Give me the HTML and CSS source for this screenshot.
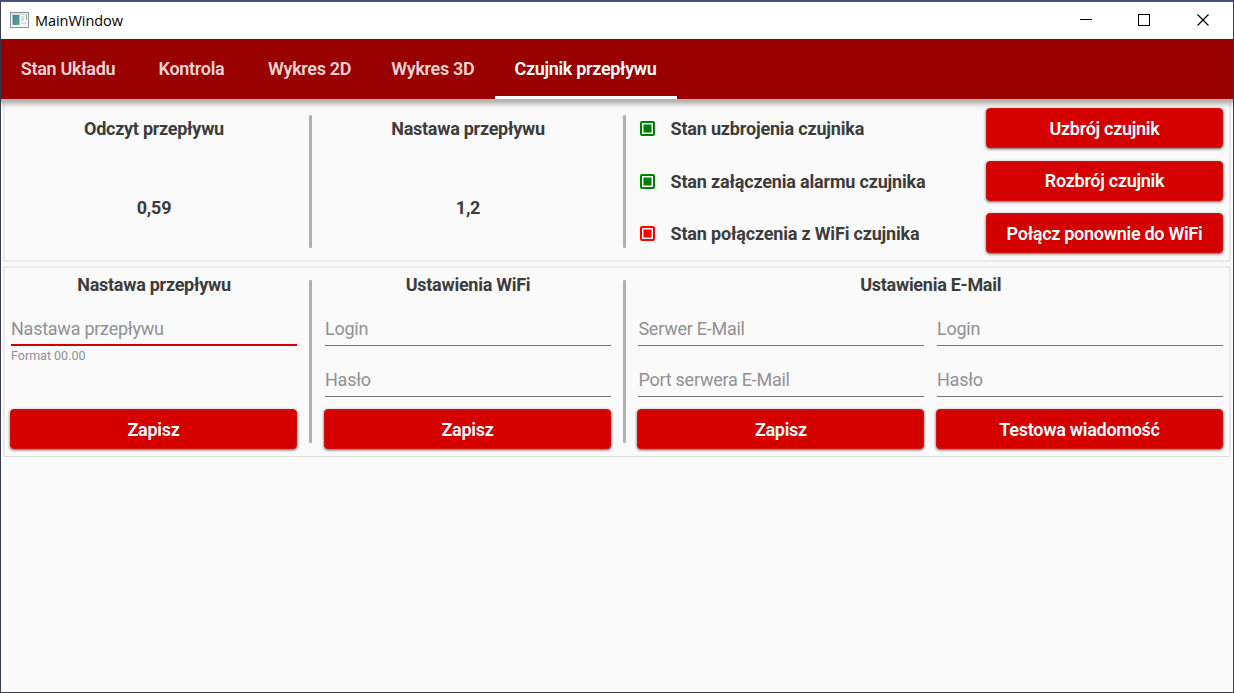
FILE: index.html
```html
<!DOCTYPE html>
<html lang="pl">
<head>
<meta charset="utf-8">
<title>MainWindow</title>
<link rel="stylesheet" href="styles.css">
</head>
<body>
<div class="window">
  <header class="titlebar">
    <svg class="app-icon" width="20" height="17" viewBox="0 0 20 17">
      <defs><linearGradient id="scr" x1="0" y1="0" x2="1" y2="1"><stop offset="0" stop-color="#3f7fa6"/><stop offset="1" stop-color="#5fae7b"/></linearGradient></defs>
      <rect x=".5" y=".5" width="18" height="15" fill="#f8f8f8" stroke="#8d949b"/>
      <rect x="1" y="1" width="17" height="2" fill="#dfe3e8"/>
      <rect x="2.500" y="3" width="7" height="10" fill="url(#scr)"/>
      <path d="M11 4h3v5h-3zM11 10h6v2h-6z" fill="#dcdfe2"/>
      <rect x="16" y="3" width="1" height="5" fill="#73b28b"/>
    </svg>
    <span class="title">MainWindow</span>
    <svg class="controls" width="131" height="12" viewBox="0 0 131 12" fill="none" stroke="#000" shape-rendering="crispEdges">
      <path d="M0 5.5h12"/>
      <rect x="58.500" y=".5" width="11" height="11"/>
      <path d="M117.500 .5l11 11M128.500 .5l-11 11" shape-rendering="auto" stroke-width="1.150"/>
    </svg>
  </header>
  <nav class="tabs">
    <a class="tab tab-state">Stan Układu</a>
    <a class="tab tab-control">Kontrola</a>
    <a class="tab tab-plot">Wykres 2D</a>
    <a class="tab tab-plot">Wykres 3D</a>
    <a class="tab tab-flow active">Czujnik przepływu</a>
  </nav>
  <main class="content">
    <section class="panel status">
      <div class="reading"><h2>Odczyt przepływu</h2><div class="value">0,59</div></div>
      <div class="divider"></div>
      <div class="reading"><h2>Nastawa przepływu</h2><div class="value">1,2</div></div>
      <div class="divider"></div>
      <div class="sensor">
        <div class="row"><i class="led"></i><span class="state">Stan uzbrojenia czujnika</span><button class="btn">Uzbrój czujnik</button></div>
        <div class="row"><i class="led"></i><span class="state">Stan załączenia alarmu czujnika</span><button class="btn">Rozbrój czujnik</button></div>
        <div class="row"><i class="led off"></i><span class="state">Stan połączenia z WiFi czujnika</span><button class="btn">Połącz ponownie do WiFi</button></div>
      </div>
    </section>
    <section class="panel settings">
      <div class="group">
        <h2>Nastawa przepływu</h2>
        <div class="column">
          <div class="field focused">Nastawa przepływu</div>
          <div class="hint">Format 00.00</div>
          <button class="btn">Zapisz</button>
        </div>
      </div>
      <div class="divider"></div>
      <div class="group">
        <h2>Ustawienia WiFi</h2>
        <div class="column">
          <div class="field">Login</div>
          <div class="field">Hasło</div>
          <button class="btn">Zapisz</button>
        </div>
      </div>
      <div class="divider"></div>
      <div class="group wide">
        <h2>Ustawienia E-Mail</h2>
        <div class="pair">
          <div class="column">
            <div class="field">Serwer E-Mail</div>
            <div class="field">Port serwera E-Mail</div>
            <button class="btn">Zapisz</button>
          </div>
          <div class="column">
            <div class="field">Login</div>
            <div class="field">Hasło</div>
            <button class="btn">Testowa wiadomość</button>
          </div>
        </div>
      </div>
    </section>
  </main>
</div>
</body>
</html>
```
FILE: styles.css
```css
* { box-sizing: border-box; }
body { margin: 0; font-family: Roboto, sans-serif; font-size: 18px; color: #3c3c3c; overflow: hidden; }
h2 { margin: 0; font-size: 18px; font-weight: 700; line-height: 22px; text-align: center; letter-spacing: -.27px; }
.window { width: 1234px; height: 693px; border: 1px solid #3b3f51; border-top: 2px solid #484f78; background: #fafafa; display: flex; flex-direction: column; }
.titlebar { height: 37px; flex: none; background: #fff; display: flex; align-items: center; padding: 0 19px 0 9px; }
.title { font: 14.5px "Open Sans", sans-serif; letter-spacing: -.05px; color: #000; margin-left: 5px; flex: 1; }
.controls { margin-right: 3px; position: relative; top: -.5px; }
.tabs { height: 60px; flex: none; display: flex; background: #990000; box-shadow: 0 3px 0 #b5b5b5, 0 4px 5px 1px rgba(0,0,0,.3); z-index: 1; }
.tab { display: flex; align-items: center; justify-content: center; color: #f0d4d4; font-weight: 600; letter-spacing: -.3px; border-bottom: 3px solid transparent; padding-top: 2px; }
.tab-state { width: 134px; }
.tab-control { width: 113px; }
.tab-plot { width: 123.25px; }
.tab-flow { width: 182px; }
.tab.active { color: #fff; border-bottom-color: #fff; }
.content { padding: 0 2px; display: flex; flex-direction: column; gap: 4px; }
.panel { border: 2px solid #ebebeb; padding: 0 6px; display: flex; }
.status { height: 163px; }
.reading { width: 286px; padding-top: 17px; text-align: center; }
.value { margin-top: 57px; line-height: 22px; font-weight: 700; letter-spacing: -.2px; }
.divider { width: 3px; background: #b0b0b0; border-radius: 1px; margin: 14px 13px 12px 12px; }
.sensor { flex: 1; display: flex; flex-direction: column; gap: 12px; padding-top: 7px; }
.row { display: flex; align-items: center; height: 40.5px; }
.row:nth-child(2) .state { padding-top: 1px; }
.led { width: 15px; height: 15px; margin: 1px 15.5px 0 1px; border: 2px solid #008000; border-radius: 2px; background: #008000; box-shadow: inset 0 0 0 1.5px #fafafa; }
.led.off { border-color: #f00; background: #f00; }
.state { flex: 1; font-weight: 700; letter-spacing: -.18px; }
.btn { font: 600 18px Roboto, sans-serif; letter-spacing: -.28px; color: #fff; background: #d40000; border: 1px solid #d8100d; border-radius: 4px; height: 40px; padding: 0; box-shadow: 0 1px 3px rgba(0,0,0,.65); }
.row .btn { width: 237px; }
.settings { height: 191px; border-bottom: 1px solid #dedede; }
.settings .divider { margin-top: 12px; margin-bottom: 13px; }
.group { width: 286px; padding-top: 6px; }
.group.wide { flex: 1; margin-left: -.6px; }
.pair { display: flex; gap: 12.6px; }
.column { width: 286px; flex: none; display: flex; flex-direction: column; }
.field { height: 51px; padding-top: 22px; line-height: 22px; letter-spacing: -.25px; color: #919191; border-bottom: 1px solid #757575; }
.field:first-child { height: 50px; }
.field + .field { padding-top: 23px; }
.field.focused { border-bottom: 2px solid #d40000; }
.hint { height: 51px; font-size: 12.500px; line-height: 20px; color: #919191; }
.column .btn { margin: 12px 0 0 -1px; }
```
